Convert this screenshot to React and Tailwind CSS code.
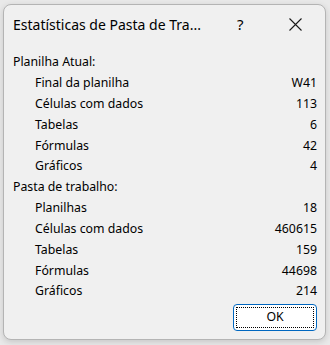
import React from 'react';

const currentSheet = [
    ['Final da planilha', 'W41'],
    ['Células com dados', '113'],
    ['Tabelas', '6'],
    ['Fórmulas', '42'],
    ['Gráficos', '4'],
];

const workbook = [
    ['Planilhas', '18'],
    ['Células com dados', '460615'],
    ['Tabelas', '159'],
    ['Fórmulas', '44698'],
    ['Gráficos', '214'],
];

const StatRow = ({ label, value }) => (
    <div className="flex h-[20.85px] items-center justify-between pl-[22px]">
        <span>{label}</span>
        <span>{value}</span>
    </div>
);

const App = () => {
    return (
        <div className="w-[330px] h-[345px] bg-[#e9e9e9] pt-[4px] pl-[3px] font-['Noto_Sans',sans-serif] text-black">
            <div className="w-[323px] h-[336px] rounded-[8px] border border-[#b4b4b4] bg-[#f0f0f0] shadow-[0_2px_6px_rgba(0,0,0,0.15)] flex flex-col">
                {/* title bar */}
                <div className="flex h-[38px] items-center text-[14px]">
                    <span className="pl-[9px] w-[233px]">Estatísticas de Pasta de Tra...</span>
                    <span className="w-[52px] text-[15px]">?</span>
                    <svg width="13" height="13" viewBox="0 0 13 13" className="mt-[1px]">
                        <path d="M0.5 0.5 L12.5 12.5 M12.5 0.5 L0.5 12.5" stroke="#1a1a1a" strokeWidth="1.1" fill="none" />
                    </svg>
                </div>

                {/* content */}
                <div className="mt-[9px] pl-[9px] pr-[8px] text-[12.3px]">
                    <div className="flex h-[20.85px] items-center">Planilha Atual:</div>
                    {currentSheet.map(([label, value]) => (
                        <StatRow key={label} label={label} value={value} />
                    ))}
                    <div className="flex h-[20.85px] items-center">Pasta de trabalho:</div>
                    {workbook.map(([label, value]) => (
                        <StatRow key={label} label={label} value={value} />
                    ))}
                    <div className="flex justify-end mt-[2px]">
                        <button className="w-[84px] h-[27px] rounded-[4px] border border-[#0067c0] bg-white p-[2px]">
                            <div className="w-full h-full border border-dotted border-black flex items-center justify-center">
                                OK
                            </div>
                        </button>
                    </div>
                </div>
            </div>
        </div>
    );
};

export default App;
